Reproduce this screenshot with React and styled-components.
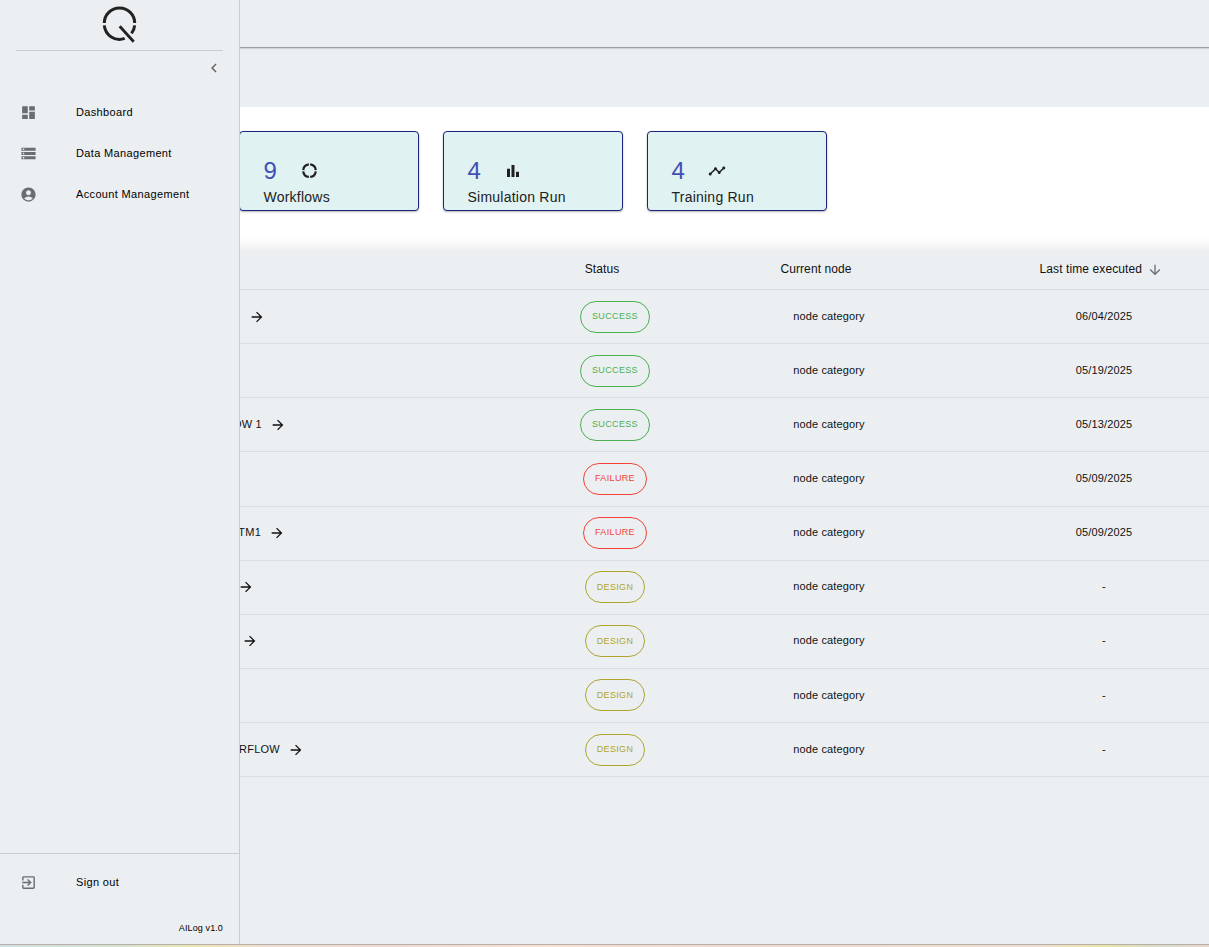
import React from "react";
import styled, { createGlobalStyle } from "styled-components";
import {
  MdDashboard,
  MdStorage,
  MdAccountCircle,
  MdExitToApp,
  MdChevronLeft,
  MdArrowForward,
  MdArrowDownward,
  MdBarChart,
  MdTimeline,
} from "react-icons/md";

const menu = [
  { label: "Dashboard", icon: MdDashboard },
  { label: "Data Management", icon: MdStorage },
  { label: "Account Management", icon: MdAccountCircle },
];

// four arcs with small gaps between them
const CycleIcon = () => (
  <svg width="18" height="18" viewBox="0 0 18 18" fill="none">
    <circle
      cx="9.5"
      cy="8.7"
      r="6.3"
      stroke="currentColor"
      strokeWidth="2.2"
      pathLength="100"
      strokeDasharray="21.5 3.5"
      strokeDashoffset="-1.75"
    />
  </svg>
);

const stats = [
  { count: 9, label: "Workflows", icon: CycleIcon },
  { count: 4, label: "Simulation Run", icon: MdBarChart },
  { count: 4, label: "Training Run", icon: MdTimeline },
];

// end: how far the name cell reaches past the sidebar
const rows = [
  { name: "", end: 25, status: "success", date: "06/04/2025" },
  { name: "", end: 0, status: "success", date: "05/19/2025" },
  { name: "OW 1", end: 46, status: "success", date: "05/13/2025" },
  { name: "", end: 0, status: "failure", date: "05/09/2025" },
  { name: "TM1", end: 45, status: "failure", date: "05/09/2025" },
  { name: "", end: 14, status: "design", date: "-" },
  { name: "", end: 18, status: "design", date: "-" },
  { name: "", end: 0, status: "design", date: "-" },
  { name: "RFLOW", end: 64, status: "design", date: "-" },
];

const statusColors = {
  success: "#4caf50",
  failure: "#f44336",
  design: "#afa52e",
};

const Logo = () => (
  <svg width="36" height="38" viewBox="0 0 36 38" fill="none">
    <g stroke="#222" strokeWidth="3" transform="translate(-0.5 0.5)">
      <path d="M2.8 16.6A15.2 15.2 0 0 1 33.2 16.6" />
      <path d="M2.8 18.9A15.2 15.2 0 0 0 23.2 31.9" />
      <path d="M33.2 18.9A15.2 15.2 0 0 1 30 26.9" />
      <path d="M18.2 19.7L32.2 35.3" strokeWidth="2.8" />
    </g>
  </svg>
);

const App = () => {
  return (
    <>
      <GlobalStyle />
      <Page>
        <Sidebar>
          <LogoBox>
            <Logo />
          </LogoBox>
          <CollapseRow>
            <MdChevronLeft />
          </CollapseRow>
          <Menu>
            {menu.map(({ label, icon: Icon }) => (
              <MenuItem key={label}>
                <Icon />
                <span>{label}</span>
              </MenuItem>
            ))}
          </Menu>
          <SidebarFooter>
            <MenuItem>
              <MdExitToApp />
              <span>Sign out</span>
            </MenuItem>
            <Version>AILog v1.0</Version>
          </SidebarFooter>
        </Sidebar>
        <Main>
          <TopBar />
          <SubBar />
          <Stats>
            {stats.map(({ count, label, icon: Icon }) => (
              <StatCard key={label}>
                <StatTop>
                  <span>{count}</span>
                  <Icon />
                </StatTop>
                <StatLabel>{label}</StatLabel>
              </StatCard>
            ))}
          </Stats>
          <Table>
            <HeadRow>
              <span />
              <HeadCell>Status</HeadCell>
              <HeadCell>Current node</HeadCell>
              <SortCell>
                <span>Last time executed</span>
                <MdArrowDownward />
              </SortCell>
            </HeadRow>
            {rows.map((row, index) => (
              <Row key={index}>
                <NameCell $end={row.end}>
                  {row.name && <span>{row.name}</span>}
                  {row.end > 0 && <MdArrowForward />}
                </NameCell>
                <Cell>
                  <Chip $color={statusColors[row.status]}>{row.status}</Chip>
                </Cell>
                <TextCell>node category</TextCell>
                <DateCell>{row.date}</DateCell>
              </Row>
            ))}
          </Table>
        </Main>
      </Page>
      <BottomEdge />
    </>
  );
};

const GlobalStyle = createGlobalStyle`
  * {
    box-sizing: border-box;
  }
  body {
    margin: 0;
    background: #ebeff2;
    color: #212121;
    font-family: "Liberation Sans", Arial, sans-serif;
    overflow: hidden;
  }
`;

const Page = styled.div`
  display: flex;
  height: 944px;
`;

const Sidebar = styled.aside`
  position: relative;
  z-index: 1;
  display: flex;
  flex-direction: column;
  width: 240px;
  flex-shrink: 0;
  background: #ebeff2;
  border-right: 1px solid #c8cdd0;
`;

const LogoBox = styled.div`
  display: flex;
  justify-content: center;
  height: 51px;
  margin: 0 16px;
  padding-top: 6px;
  border-bottom: 1px solid #c8cdd0;
`;

const CollapseRow = styled.div`
  display: flex;
  justify-content: flex-end;
  padding: 8px 16px 0 0;
  color: #666;
  svg {
    width: 18px;
    height: 18px;
  }
`;

const Menu = styled.nav`
  flex: 1;
  padding-top: 15px;
`;

const MenuItem = styled.div`
  display: flex;
  align-items: center;
  height: 41px;
  padding-left: 20px;
  color: #000;
  font-size: 11px;
  letter-spacing: 0.35px;
  span {
    padding-bottom: 2px;
  }
  svg {
    width: 17px;
    height: 17px;
    margin-right: 39px;
    color: #6b6e70;
  }
`;

const SidebarFooter = styled.div`
  height: 91px;
  padding-top: 8px;
  border-top: 1px solid #c8cdd0;
`;

const Version = styled.div`
  margin-top: 19px;
  padding-right: 16px;
  color: #000;
  font-size: 9px;
  letter-spacing: 0.12px;
  line-height: 12px;
  text-align: right;
`;

const Main = styled.main`
  flex: 1;
  min-width: 0;
`;

const TopBar = styled.header`
  height: 48px;
  border-bottom: 1px solid #9b9fa2;
  box-shadow: 0 1px 1px rgba(0, 0, 0, 0.1);
`;

const SubBar = styled.div`
  height: 59px;
`;

const Stats = styled.section`
  display: flex;
  gap: 24px;
  height: 143px;
  padding-top: 24px;
  background: linear-gradient(#fff 0, #fff 128px, #fafafa 136px, #eeefef 143px);
`;

const StatCard = styled.div`
  width: 180px;
  height: 80px;
  padding: 26px 23px 0 23.5px;
  background: #e0f2f1;
  border: 1px solid #1a237e;
  border-radius: 4px;
  box-shadow: 0 1px 2px rgba(0, 0, 0, 0.3);
  &:first-child {
    margin-left: -1px;
  }
`;

const StatTop = styled.div`
  display: flex;
  align-items: center;
  height: 26px;
  span {
    width: 36.4px;
    color: #3f51b5;
    font-size: 24px;
  }
  svg {
    width: 18px;
    height: 18px;
  }
`;

const StatLabel = styled.div`
  font-size: 14px;
  line-height: 26px;
  letter-spacing: 0.23px;
`;

const Table = styled.div`
  color: #111;
  font-size: 11px;
`;

const HeadRow = styled.div`
  display: grid;
  grid-template-columns: 240px 270px 158px 301px;
  align-items: center;
  height: 40.05px;
  border-bottom: 1px solid #d9dddf;
`;

const HeadCell = styled.div`
  padding: 0 26px 2px 0;
  font-size: 12px;
  letter-spacing: 0.1px;
  text-align: center;
`;

const SortCell = styled(HeadCell)`
  display: flex;
  align-items: center;
  justify-content: center;
  padding: 0 0 0 85px;
  span {
    padding-bottom: 2px;
  }
  svg {
    width: 16px;
    height: 16px;
    margin-left: 4.5px;
    color: #6b6e70;
  }
`;

const Row = styled.div`
  display: grid;
  grid-template-columns: 240px 270px 158px 301px;
  align-items: center;
  height: 54.125px;
  border-bottom: 1px solid #dcdfe1;
`;

const NameCell = styled.div`
  display: flex;
  align-items: center;
  justify-content: flex-end;
  width: ${(props) => props.$end}px;
  overflow: hidden;
  letter-spacing: 0.25px;
  white-space: nowrap;
  span {
    margin-right: 8px;
    padding-bottom: 2px;
  }
  svg {
    width: 16px;
    height: 16px;
    flex-shrink: 0;
  }
`;

const Cell = styled.div`
  display: flex;
  align-items: center;
  justify-content: center;
`;

const TextCell = styled(Cell)`
  padding-bottom: 1.8px;
  letter-spacing: 0.13px;
`;

const DateCell = styled(TextCell)`
  padding-left: 91px;
`;

const Chip = styled.div`
  height: 32px;
  padding: 0.35px 11px 0;
  color: ${(props) => props.$color};
  border: 1px solid ${(props) => props.$color};
  border-radius: 16px;
  font-size: 9px;
  line-height: 28px;
  letter-spacing: 0.35px;
  text-transform: uppercase;
`;

const BottomEdge = styled.div`
  height: 3px;
  border-top: 1px solid #b8b0a8;
  background: linear-gradient(
    90deg,
    #cfe0e5,
    #d5e3cf 10%,
    #e8e6b0 16%,
    #f0dccf 22%,
    #efd8d3 32%,
    #f7e0cf 45%,
    #efd8d0 60%,
    #f0dccf 86%,
    #e8e6a0 91%,
    #d5dccb 96%,
    #ead6cc
  );
`;

export default App;
